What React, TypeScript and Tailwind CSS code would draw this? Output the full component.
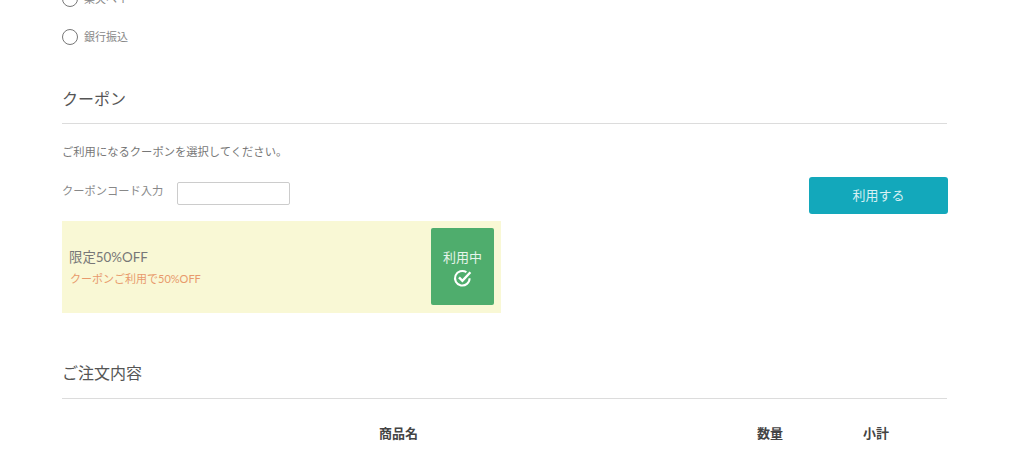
export default function App() {
  return (
    <div className="h-[450px] w-[1024px] overflow-hidden bg-white font-['Lato','Noto_Sans_CJK_JP',sans-serif] text-[#555]">
      <div className="ml-[62px] mt-[-11px] w-[886px]">
        <div className="flex h-[19px] items-center gap-[6px] text-[11px] text-[#888]">
          <span className="h-4 w-4 rounded-full border border-[#777]" />
          <span className="pt-[2px]">楽天ペイ</span>
        </div>
        <div className="mt-[19px] flex h-[19px] items-center gap-[6px] text-[11px] text-[#888]">
          <span className="h-4 w-4 rounded-full border border-[#777]" />
          <span className="pt-[2px]">銀行振込</span>
        </div>

        <h2 className="mt-[41px] w-[885px] border-b border-[#dcdcdc] pb-[12px] text-[16px] leading-[24px] font-normal">クーポン</h2>
        <p className="mt-[20px] text-[11.3px] leading-[16px] text-[#777]">ご利用になるクーポンを選択してください。</p>

        <div className="mt-[17px] flex items-start justify-between">
          <div className="flex items-start pt-[5px]">
            <span className="w-[115px] text-[11.25px] leading-[18px] text-[#888]">クーポンコード入力</span>
            <input className="h-[23px] w-[113px] rounded-[2px] border border-[#ccc] bg-white" />
          </div>
          <button className="h-[37px] w-[139px] rounded-[3px] bg-[#13a8bb] text-[13px] text-[#d8f1f4]">利用する</button>
        </div>

        <div className="mt-[7px] flex h-[92px] w-[439px] items-start justify-between bg-[#f9f8d5] pl-[7px] pr-[7px] pt-[7px]">
          <div className="pt-[19px]">
            <p className="text-[13.4px] leading-[20px] text-[#777]">限定50%OFF</p>
            <p className="mt-[4px] pl-[1px] text-[11px] leading-[16px] text-[#e89a6c]">クーポンご利用で50%OFF</p>
          </div>
          <div className="flex h-[77px] w-[63px] flex-col items-center rounded-[2px] bg-[#4fad6d] pt-[20px] text-[#e6f4ea]">
            <span className="text-[13px] leading-[18px]">利用中</span>
            <svg width="20" height="19" viewBox="0 0 20 19" fill="none" stroke="white" className="mt-[3px]">
              <path d="M16.6 9.2a7.3 7.3 0 1 1-3.2-6" strokeWidth="2" />
              <path d="M6 8.4l3.4 3.4 8-8.6" strokeWidth="2.4" />
            </svg>
          </div>
        </div>

        <h2 className="mt-[48px] w-[885px] border-b border-[#dcdcdc] pb-[13px] text-[16px] leading-[24px] font-normal">ご注文内容</h2>

        <div className="mt-[25px] flex text-[13px] font-bold leading-[19px] text-[#444]">
          <span className="ml-[317px] w-[378px]">商品名</span>
          <span className="w-[106px]">数量</span>
          <span>小計</span>
        </div>
      </div>
    </div>
  );
}
